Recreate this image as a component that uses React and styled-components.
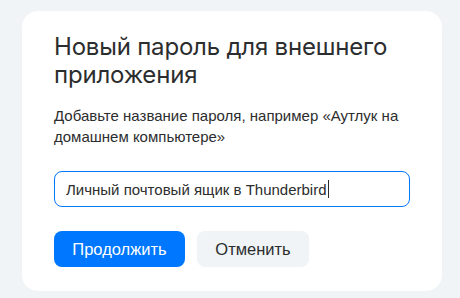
import styled, { createGlobalStyle } from 'styled-components';

const GlobalStyle = createGlobalStyle`
  html, body {
    margin: 0;
    padding: 0;
    background: #f0f4f7;
  }
  body {
    font-family: 'Liberation Sans', Arial, sans-serif;
    color: #2c2d2e;
  }
`;

const Page = styled.div`
  padding: 11px 18px 7px 22px;
`;

const Card = styled.div`
  background: #fff;
  border-radius: 16px;
  height: 280px;
  box-sizing: border-box;
  padding: 22px 32px 24px;
  display: flex;
  flex-direction: column;
`;

const Title = styled.h1`
  margin: 0;
  font-family: Inter, 'Noto Sans', sans-serif;
  font-weight: 400;
  font-size: 24px;
  line-height: 28px;
  letter-spacing: -0.2px;
`;

const Hint = styled.p`
  margin: 16px 0 0;
  font-size: 15px;
  line-height: 21px;
`;

const Field = styled.div`
  margin-top: 24px;
  height: 36px;
  box-sizing: border-box;
  border: 1px solid #0077ff;
  border-radius: 8px;
  padding: 0 11px;
  display: flex;
  align-items: center;
  font-size: 15px;
`;

const Caret = styled.span`
  display: inline-block;
  width: 1px;
  height: 18px;
  margin-left: 1px;
  background: #2c2d2e;
`;

const Actions = styled.div`
  margin-top: 24px;
  display: flex;
  gap: 12px;
`;

const Button = styled.button`
  height: 36px;
  padding: 0 16px;
  min-width: ${(p) => (p.$primary ? '131px' : '112px')};
  border: none;
  border-radius: 8px;
  font-family: 'Liberation Sans', Arial, sans-serif;
  font-size: 16.5px;
  background: ${(p) => (p.$primary ? '#0077ff' : '#f0f4f7')};
  color: ${(p) => (p.$primary ? '#fff' : '#2c2d2e')};
  cursor: pointer;
`;

export default function App() {
  return (
    <Page>
      <GlobalStyle />
      <Card>
        <Title>Новый пароль для внешнего приложения</Title>
        <Hint>
          Добавьте название пароля, например «Аутлук на домашнем компьютере»
        </Hint>
        <Field>
          Личный почтовый ящик в Thunderbird
          <Caret />
        </Field>
        <Actions>
          <Button $primary>Продолжить</Button>
          <Button>Отменить</Button>
        </Actions>
      </Card>
    </Page>
  );
}
